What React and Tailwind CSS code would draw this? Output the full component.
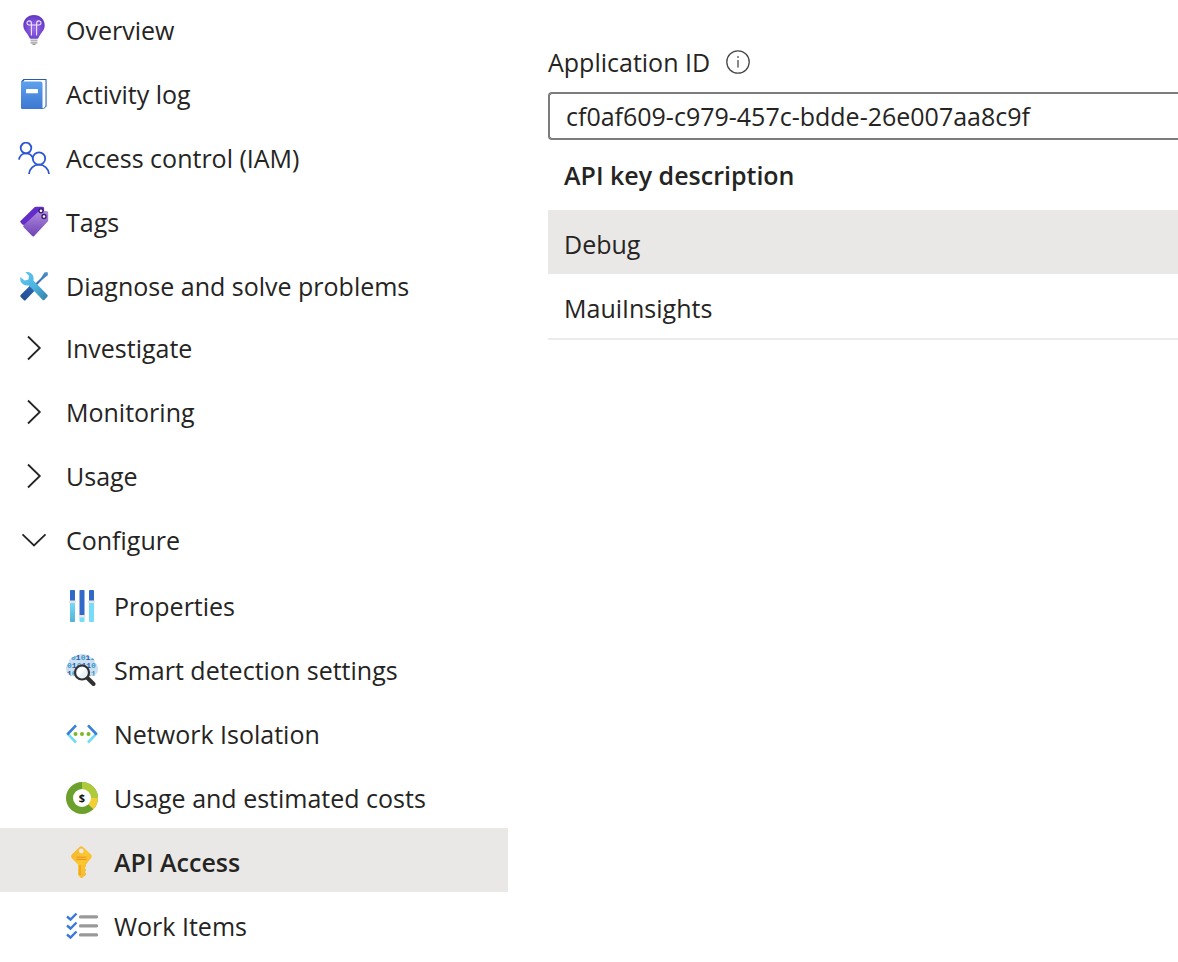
import React from 'react';

function BulbIcon() {
  return (
    <svg viewBox="0 0 32 32" className="h-8 w-8 shrink-0" aria-hidden="true">
      <defs>
        <radialGradient id="bulb" cx="0.5" cy="0.55" r="0.6">
          <stop offset="0" stopColor="#9a6fe8" />
          <stop offset="0.5" stopColor="#7d4fd6" />
          <stop offset="1" stopColor="#5a32c0" />
        </radialGradient>
      </defs>
      <path d="M16 1C9.800 1 5.300 5.600 5.300 11.500c0 3.600 2 5.700 3.700 8 1.500 2 2.200 3.600 2.500 4.300.2.600.6 1 1.300 1h6.400c.7 0 1.100-.4 1.300-1 .3-.7 1-2.300 2.500-4.300 1.700-2.300 3.700-4.400 3.700-8C26.700 5.600 22.200 1 16 1z" fill="url(#bulb)" />
      <path d="M13.400 21.500V9.500c0-3.700-4.400-3.200-4.400-.6 0 2 2 2.100 3.600 2.100h6.800c1.600 0 3.600-.1 3.600-2.100 0-2.600-4.400-3.100-4.400.6v12" fill="none" stroke="#efe6ff" strokeWidth="1.100" />
      <path d="M12.500 25.500h7v1.700h-7zM12.500 27.800h7v1.400l-.6.500h-5.800l-.6-.5z" fill="#b5b5b5" />
      <path d="M14 29.800h4l-.8 1.200h-2.400z" fill="#999" />
    </svg>
  );
}

function BookIcon() {
  return (
    <svg viewBox="0 0 32 32" className="h-8 w-8 shrink-0" aria-hidden="true">
      <defs>
        <linearGradient id="book" x1="0" y1="0" x2="0" y2="1">
          <stop offset="0" stopColor="#5ea0ef" />
          <stop offset="1" stopColor="#3c78d0" />
        </linearGradient>
      </defs>
      <path d="M5.500 1H28.500V28L25.500 31H5Q3.500 31 3.500 29.500V3z" fill="#2c5aa5" />
      <path d="M6.500 2H27.500V27.500L25.500 30.500 24 30V4H5z" fill="#fff" />
      <path d="M28.500 2v26l-3 3" fill="none" stroke="#7ba3dc" strokeWidth="1" />
      <path d="M3 3.500h19.500Q24.500 3.500 24.500 5.500v24Q24.500 31 23 31H4.500Q3 31 3 29.500z" fill="url(#book)" />
      <rect x="8" y="11" width="12" height="4.200" rx=".4" fill="#fff" />
    </svg>
  );
}

function PeopleIcon() {
  return (
    <svg viewBox="0 0 32 32" className="h-8 w-8 shrink-0" aria-hidden="true" fill="none" stroke="#2b55d3" strokeWidth="1.800">
      <circle cx="8" cy="6" r="5.300" />
      <path d="M1 17.700c.4-3.700 3.300-6.400 7-6.400 3 0 5.500 1.800 6.500 4" />
      <circle cx="21" cy="16.500" r="6.200" />
      <path d="M11 32c.4-5.400 4.700-9.300 10-9.300S30.600 26.600 31 32" />
    </svg>
  );
}

function TagIcon() {
  return (
    <svg viewBox="0 0 32 32" className="h-8 w-8 shrink-0" aria-hidden="true">
      <defs>
        <linearGradient id="tag" x1="0" y1="0" x2="0" y2="1">
          <stop offset="0" stopColor="#b18bde" />
          <stop offset="1" stopColor="#6d42b5" />
        </linearGradient>
      </defs>
      <path d="M16.500 1.200Q17 .7 18 .7h6.500q1.600 0 1.600 1.600v7L8 20 4 18.200 2 15.600z" fill="#632dca" />
      <path d="M20.400 5.500Q21 5 22 5h6.500q1.700 0 1.700 1.700V14q0 1-.7 1.700L16.200 30q-1 1.100-2 .1l-8.600-8.900q-1-1 0-2z" fill="url(#tag)" />
      <path d="M5 17.500 20.500 4.500" stroke="#632dca" strokeWidth="1" />
      <circle cx="23" cy="4.800" r="2" fill="#fff" stroke="#341a6e" strokeWidth="1.300" />
      <circle cx="26" cy="10.500" r="2" fill="#fff" stroke="#341a6e" strokeWidth="1.300" />
    </svg>
  );
}

function ToolsIcon() {
  return (
    <svg viewBox="0 0 32 32" className="h-8 w-8 shrink-0" aria-hidden="true">
      <defs>
        <linearGradient id="driver" x1="0" y1="1" x2="1" y2="0">
          <stop offset="0" stopColor="#244a91" />
          <stop offset="0.5" stopColor="#2d66ad" />
          <stop offset="1" stopColor="#4a91c7" />
        </linearGradient>
        <linearGradient id="wrench" x1="0" y1="0" x2="1" y2="1">
          <stop offset="0" stopColor="#61c7ef" />
          <stop offset="0.5" stopColor="#4db5e2" />
          <stop offset="1" stopColor="#3680a5" />
        </linearGradient>
      </defs>
      <path d="M29.500 2 26.500 2.500 23 8l-7.600 7.600-2-1.400L2.700 25q-1 1 0 2l3 3q1 1 2 0L18 19.300l-1.300-2L24.500 9.400l5.500-4.500z" fill="url(#driver)" />
      <path d="M7.500 2.300c3-.9 7.100 1 7.900 4.700.3 1.500.2 2.500 0 3.500L29.300 24.700q1 1 0 2l-2.800 3q-1 1-2 0L10.800 15.400C7 16.200 3.600 14 2.600 11.200c-.5-1.500-.4-3-.2-4.200l4.200 3.600 3.700-.9.800-3.700z" fill="url(#wrench)" />
    </svg>
  );
}

function Chevron({ open }) {
  return (
    <svg viewBox="0 0 32 32" className="h-8 w-8 shrink-0" aria-hidden="true" fill="none" stroke="#252423" strokeWidth="1.800">
      <path d={open ? 'M4.500 10.300 16 21.500 27.500 10.300' : 'M10 4.500 21.800 16 10 27.500'} />
    </svg>
  );
}

function SlidersIcon() {
  return (
    <svg viewBox="0 0 32 32" className="h-8 w-8 shrink-0" aria-hidden="true">
      <defs>
        <linearGradient id="slide" x1="0" y1="0" x2="0" y2="1">
          <stop offset="0" stopColor="#76dcfa" />
          <stop offset="1" stopColor="#56b1d4" />
        </linearGradient>
      </defs>
      <rect x="4" y="0" width="5" height="12" rx=".8" fill="#3269c8" />
      <rect x="4" y="12" width="5" height="20" rx=".8" fill="url(#slide)" />
      <rect x="3" y="10.500" width="7" height="2.500" rx=".6" fill="#e6e6e6" />
      <rect x="13.500" y="0" width="5" height="27" rx=".8" fill="#3269c8" />
      <rect x="13.500" y="26" width="5" height="6" rx=".8" fill="#76dcfa" />
      <rect x="12.500" y="25" width="7" height="2.500" rx=".6" fill="#e6e6e6" />
      <rect x="23" y="0" width="5" height="12" rx=".8" fill="#3269c8" />
      <rect x="23" y="12" width="5" height="20" rx=".8" fill="#76dcfa" />
      <rect x="22" y="10.500" width="7" height="2.500" rx=".6" fill="#e6e6e6" />
    </svg>
  );
}

function DetectionIcon() {
  return (
    <svg viewBox="0 0 32 32" className="h-8 w-8 shrink-0" aria-hidden="true">
      <defs>
        <clipPath id="cloud">
          <path d="M8 2.500Q11 0 16 0q6 0 9 3.500 3 .5 4 5 3 2 3 6.500t-3.500 6.500H4.500Q0 20 0 15q0-4 2.500-6Q3 4 8 2.500z" />
        </clipPath>
      </defs>
      <g clipPath="url(#cloud)">
        <rect width="32" height="22" fill="#cbdff1" />
        <g fontFamily="Liberation Mono, monospace" fontWeight="700" fontSize="8">
          <text x="5" y="6" fill="#3999c6">0<tspan fill="#2859a5">1</tspan>0<tspan fill="#2859a5">1</tspan>1</text>
          <text x="1" y="14" fill="#3999c6">0<tspan fill="#2859a5">1</tspan>0<tspan fill="#2859a5">11</tspan>0</text>
          <text x="1" y="22" fill="#2859a5">1<tspan fill="#3999c6">0</tspan>101<tspan fill="#3999c6">1</tspan></text>
        </g>
      </g>
      <path d="m21.500 24 6 6" stroke="#323232" strokeWidth="4" strokeLinecap="round" />
      <circle cx="16" cy="18.500" r="7" fill="#eaf3fb" stroke="#323232" strokeWidth="2.200" />
      <path d="M11 18.500a5 5 0 0 1 8.500-3.500L13 22.500a5 5 0 0 1-2-4z" fill="#fff" />
    </svg>
  );
}

function NetworkIcon() {
  return (
    <svg viewBox="0 0 32 32" className="h-8 w-8 shrink-0" aria-hidden="true" fill="none" strokeWidth="2.600">
      <path d="M1.300 15.300 10 24.500M30.700 15.300 22 24.500" stroke="#6fdcf7" />
      <path d="M10 7.300 1.300 16.500M22 7.300l8.700 9.200" stroke="#397fdb" />
      <g fill="#7ab826">
        <circle cx="9.500" cy="16" r="2" />
        <circle cx="16" cy="16" r="2" />
        <circle cx="22.500" cy="16" r="2" />
      </g>
    </svg>
  );
}

function CostIcon() {
  return (
    <svg viewBox="0 0 32 32" className="h-8 w-8 shrink-0" aria-hidden="true">
      <circle cx="16" cy="16" r="16" fill="#6ca02c" />
      <path d="M16 16V0a16 16 0 0 1 16 16z" fill="#afcb3b" />
      <path d="M16 16h16a16 16 0 0 1-4.700 11.300z" fill="#f2cf37" />
      <circle cx="16" cy="16" r="9" fill="#fff" />
      <text x="16" y="20" textAnchor="middle" fontFamily="Open Sans, sans-serif" fontWeight="700" fontSize="11" fill="#111">$</text>
    </svg>
  );
}

function KeyIcon() {
  return (
    <svg viewBox="0 0 32 32" className="h-8 w-8 shrink-0" aria-hidden="true">
      <defs>
        <linearGradient id="key" x1="0" y1="0" x2="1" y2="1">
          <stop offset="0" stopColor="#f5b12b" />
          <stop offset="0.5" stopColor="#fbc82f" />
          <stop offset="1" stopColor="#f4ad32" />
        </linearGradient>
      </defs>
      <path fillRule="evenodd" d="M13.500 1Q15.200-.6 17 1l8 7.500q1.300 1.500.3 3.300L20 18.500v2l-1.400 1.500 1.400 1.500v1.200l-1.200 1.300 1.200 1.500v1.300L16 32h-1l-3-3V18.500L5.600 12q-1-1.700.1-3.200zM15.300 2.600a2.400 2.400 0 1 0 0 4.800 2.400 2.400 0 0 0 0-4.800z" fill="url(#key)" />
      <path d="M10.500 11.200h10M10.500 13.400h10M14 19v10" stroke="#e58e24" strokeWidth="1" fill="none" />
    </svg>
  );
}

function ChecklistIcon() {
  return (
    <svg viewBox="0 0 32 32" className="h-8 w-8 shrink-0" aria-hidden="true" fill="none">
      <path d="M14.500 6.900h16M14.500 15.900h16M14.500 24.900h16" stroke="#999" strokeWidth="3.400" strokeLinecap="round" />
      <path d="m1 6.500 3.500 3 6-6M1 15.500l3.500 3 6-6M1 24.500l3.500 3 6-6" stroke="#3b78dc" strokeWidth="2.400" />
    </svg>
  );
}

const resourceItems = [
  { label: 'Overview', Icon: BulbIcon },
  { label: 'Activity log', Icon: BookIcon },
  { label: 'Access control (IAM)', Icon: PeopleIcon },
  { label: 'Tags', Icon: TagIcon },
  { label: 'Diagnose and solve problems', Icon: ToolsIcon },
];

const configureItems = [
  { label: 'Properties', Icon: SlidersIcon },
  { label: 'Smart detection settings', Icon: DetectionIcon },
  { label: 'Network Isolation', Icon: NetworkIcon },
  { label: 'Usage and estimated costs', Icon: CostIcon },
  { label: 'API Access', Icon: KeyIcon, selected: true },
  { label: 'Work Items', Icon: ChecklistIcon },
];

function NavLink({ label, Icon, selected, nested }) {
  return (
    <li>
      <a
        href="#"
        aria-current={selected ? 'page' : undefined}
        className={`flex h-16 items-center gap-4 pt-1 whitespace-nowrap ${nested ? 'pl-[66px]' : 'pl-[18px]'} ${selected ? 'bg-[#e9e8e6] font-semibold' : ''}`}
      >
        <Icon />
        <span>{label}</span>
      </a>
    </li>
  );
}

function NavGroup({ label, open, children }) {
  return (
    <li>
      <button type="button" aria-expanded={!!open} className="flex h-16 w-full items-center gap-4 pl-[18px] text-left">
        <Chevron open={open} />
        <span>{label}</span>
      </button>
      {children}
    </li>
  );
}

export default function App() {
  return (
    <div className="flex overflow-hidden bg-white font-['Open_Sans',sans-serif] text-[25px] leading-8 text-[#252423]">
      <nav className="-mt-1 w-[508px] shrink-0" aria-label="Resource menu">
        <ul>
          {resourceItems.map((item) => (
            <NavLink key={item.label} {...item} />
          ))}
          <NavGroup label="Investigate" />
          <NavGroup label="Monitoring" />
          <NavGroup label="Usage" />
          <NavGroup label="Configure" open>
            <ul>
              {configureItems.map((item) => (
                <NavLink key={item.label} nested {...item} />
              ))}
            </ul>
          </NavGroup>
        </ul>
      </nav>

      <main className="min-w-0 flex-1 pt-[46px] pl-10">
        <div className="flex items-center gap-4">
          <label htmlFor="application-id">Application ID</label>
          <svg viewBox="0 0 24 24" className="h-6 w-6" fill="none" stroke="#4a4948" strokeWidth="1.300" aria-hidden="true">
            <circle cx="12" cy="12" r="11.200" />
            <path d="M12 10v7.500" />
            <circle cx="12" cy="7" r=".5" fill="#4a4948" strokeWidth=".8" />
          </svg>
        </div>
        <input
          id="application-id"
          type="text"
          readOnly
          value="cf0af609-c979-457c-bdde-26e007aa8c9f"
          className="mt-[14px] block h-12 w-full rounded-l border-2 border-r-0 border-[#7d7c7b] bg-white px-4"
        />
        <table className="w-full border-collapse text-left">
          <thead>
            <tr className="h-[70px]">
              <th scope="col" className="px-4 py-0 font-semibold">API key description</th>
            </tr>
          </thead>
          <tbody>
            <tr className="h-16 bg-[#e9e8e6]">
              <td className="px-4 pt-1 pb-0">Debug</td>
            </tr>
            <tr className="h-16 shadow-[0_2px_0_#edebe9]">
              <td className="px-4 pt-1 pb-0">MauiInsights</td>
            </tr>
          </tbody>
        </table>
      </main>
    </div>
  );
}
